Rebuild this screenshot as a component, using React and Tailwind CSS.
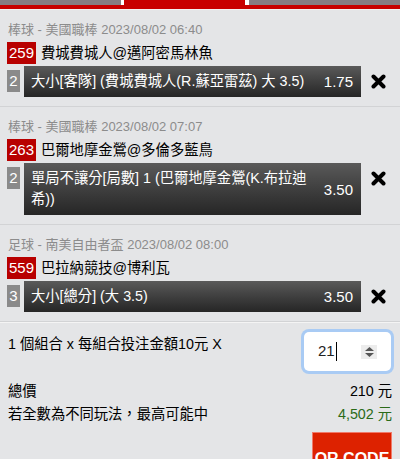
const font = { fontFamily: '"Liberation Sans", "Noto Sans CJK TC", Arial, sans-serif' };

const bets = [
  {
    head: "棒球 - 美國職棒 2023/08/02 06:40",
    no: "259",
    teams: "費城費城人@邁阿密馬林魚",
    count: "2",
    text: "大小[客隊] (費城費城人(R.蘇亞雷茲) 大 3.5)",
    odds: "1.75",
  },
  {
    head: "棒球 - 美國職棒 2023/08/02 07:07",
    no: "263",
    teams: "巴爾地摩金鶯@多倫多藍鳥",
    count: "2",
    text: "單局不讓分[局數] 1 (巴爾地摩金鶯(K.布拉迪希))",
    odds: "3.50",
  },
  {
    head: "足球 - 南美自由者盃 2023/08/02 08:00",
    no: "559",
    teams: "巴拉納競技@博利瓦",
    count: "3",
    text: "大小[總分] (大 3.5)",
    odds: "3.50",
  },
];

function CloseIcon() {
  return (
    <svg width="15" height="15" viewBox="0 0 15 15" className="block">
      <path d="M2.5 2.5 L12.5 12.5 M12.5 2.5 L2.5 12.5" stroke="#000" strokeWidth="4" strokeLinecap="round" />
    </svg>
  );
}

function BetItem({ bet }) {
  return (
    <div className="px-[7px] pt-[10px] pb-[9px] border-b border-[#d2d3d5]">
      {/* league + time */}
      <div className="text-[13px] leading-[20px] text-[#8c8c8c] pl-[1px]">{bet.head}</div>

      {/* match */}
      <div className="mt-[2px] flex items-center">
        <span className="w-[29px] h-[22px] bg-[#b80000] text-white text-[15px] leading-[22px] text-center">{bet.no}</span>
        <span className="ml-[5px] text-[14.3px] leading-[22px] text-black">{bet.teams}</span>
      </div>

      {/* selection */}
      <div className="mt-[2px] flex items-start">
        <span className="mt-[4px] w-[13px] h-[22px] bg-[#8a8a8a] text-white text-[15px] leading-[22px] text-center">{bet.count}</span>
        <div className="ml-[4px] w-[337px] flex items-center justify-between pl-[7px] pr-[8px] py-[5px] bg-gradient-to-b from-[#5a5a5a] to-[#262626]">
          <span className="w-[282px] text-white text-[14.3px] leading-[21px]">{bet.text}</span>
          <span className="text-white text-[15px] leading-[21px]">{bet.odds}</span>
        </div>
        <button className="ml-[10px] mt-[8px]">
          <CloseIcon />
        </button>
      </div>
    </div>
  );
}

export default function App() {
  return (
    <div className="w-[400px] bg-[#e4e5e7]" style={font}>
      {/* tabs */}
      <div className="flex h-[5px] bg-white">
        <div className="w-[121px] bg-[#877d83]"></div>
        <div className="ml-[3px] w-[121px] bg-[#c80000]"></div>
        <div className="ml-[4px] flex-1 bg-[#877d83]"></div>
      </div>
      <div className="h-[4px] bg-[#c80000]"></div>
      <div className="h-[1px] bg-[#f2f2f2]"></div>

      {bets.map((b) => (
        <BetItem key={b.no} bet={b} />
      ))}

      {/* summary */}
      <div className="border-t border-[#f4f4f4] px-[8px] pt-[7px]">
        <div className="flex items-start justify-between">
          <span className="mt-[3px] text-[14.3px] leading-[22px] text-black">1 個組合 x 每組合投注金額10元 X</span>
          <div className="mt-[2px] mr-[1px] w-[87px] h-[39px] rounded-[5px] bg-white ring-[3px] ring-[#a9cbf4] flex items-center justify-between pl-[14px] pr-[14px]">
            <span className="text-[15px] text-[#222] flex items-center">
              21<span className="ml-[1px] inline-block w-[1px] h-[19px] bg-black"></span>
            </span>
            <span className="w-[16px] h-[14px] bg-[#ececec] flex flex-col items-center justify-center gap-[2px]">
              <svg width="9" height="4" viewBox="0 0 9 4"><path d="M0 4 L4.5 0 L9 4 Z" fill="#555" /></svg>
              <svg width="9" height="4" viewBox="0 0 9 4"><path d="M0 0 L4.5 4 L9 0 Z" fill="#555" /></svg>
            </span>
          </div>
        </div>

        <div className="mt-[9px] flex justify-between text-[14.3px] leading-[23px] text-black">
          <span>總價</span>
          <span>210 元</span>
        </div>
        <div className="flex justify-between text-[14.3px] leading-[23px]">
          <span className="text-black">若全數為不同玩法，最高可能中</span>
          <span className="text-[#2b6b18]">4,502 元</span>
        </div>

        <div className="mt-[6px] flex justify-end">
          <button className="w-[80px] h-[44px] bg-[#dd2200] border border-[#f07a6a] text-white text-[16px] font-bold pt-[10px]">
            QR CODE
          </button>
        </div>
      </div>
    </div>
  );
}
